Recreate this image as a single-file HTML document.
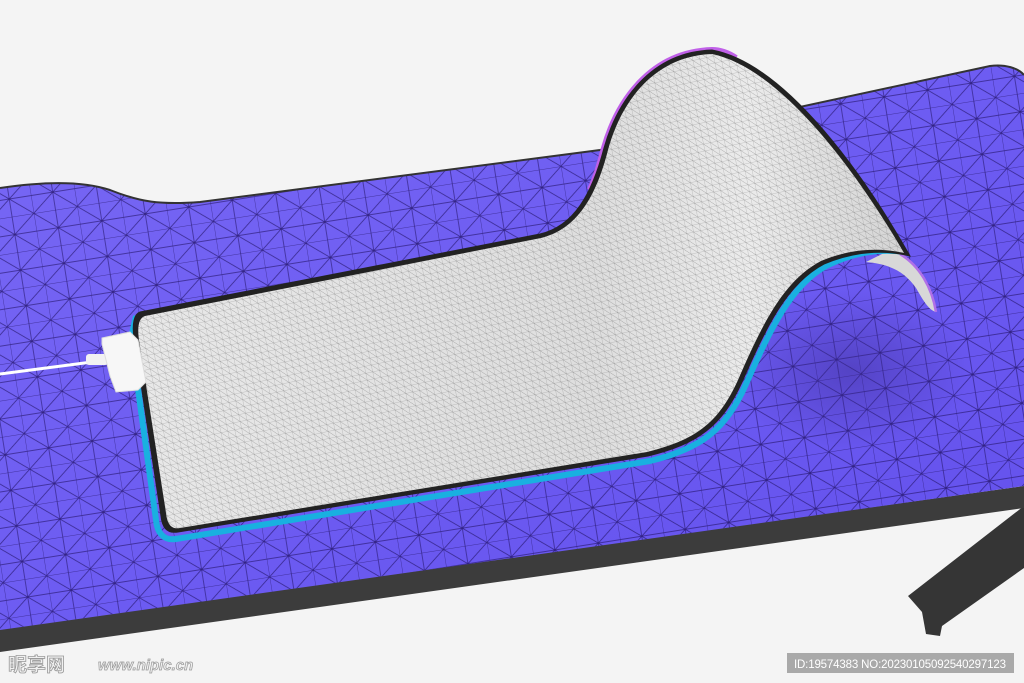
<!DOCTYPE html>
<html><head><meta charset="utf-8"><style>
html,body{margin:0;padding:0;width:1024px;height:683px;overflow:hidden;background:#f4f4f4}
svg{display:block}
</style></head><body>
<svg width="1024" height="683" viewBox="0 0 1024 683" xmlns="http://www.w3.org/2000/svg">
<defs>
<pattern id="tri" width="44" height="36" patternUnits="userSpaceOnUse" patternTransform="rotate(-9)">
<path d="M0 0H44M0 0V36M0 0L44 36M44 0L0 36M22 0V36M0 18H44" stroke="#1e1060" stroke-width="0.7" opacity="0.75" fill="none"/>
</pattern>
<pattern id="fine" width="7" height="7" patternUnits="userSpaceOnUse" patternTransform="rotate(-12)">
<path d="M0 0H7M0 0V7M0 0L7 7" stroke="#444" stroke-width="0.4" fill="none"/>
</pattern>
<linearGradient id="desk" x1="0" y1="0" x2="1" y2="1">
<stop offset="0" stop-color="#7868f4"/><stop offset="0.5" stop-color="#6d5cf2"/><stop offset="1" stop-color="#6350ec"/>
</linearGradient>
<linearGradient id="mat" x1="0" y1="0" x2="1" y2="0">
<stop offset="0" stop-color="#e8e8e8"/><stop offset="0.6" stop-color="#dedede"/><stop offset="0.8" stop-color="#ebebeb"/><stop offset="1" stop-color="#d4d4d4"/>
</linearGradient>
<radialGradient id="shadow" cx="0.5" cy="0.5" r="0.5"><stop offset="0" stop-color="#3a2a90" stop-opacity="0.45"/><stop offset="1" stop-color="#3a2a90" stop-opacity="0"/></radialGradient>
</defs>
<polygon points="908,596 1024,506 1024,568 942,626 940,636 926,634 922,612" fill="#353535"/>
<rect x="1014" y="380" width="10" height="30" rx="5" fill="#333"/>
<path d="M0 628 L1024 486 L1024 508 L0 652 Z" fill="#3c3c3c"/>
<path d="M0 188 C40 182 80 180 110 190 C140 202 160 205 200 202 L600 150 L990 66 C1005 64 1018 68 1024 75 L1024 486 L0 630 Z" fill="url(#desk)"/>
<path d="M0 188 C40 182 80 180 110 190 C140 202 160 205 200 202 L600 150 L990 66 C1005 64 1018 68 1024 75 L1024 486 L0 630 Z" fill="url(#tri)"/>
<path d="M0 188 C40 182 80 180 110 190 C140 202 160 205 200 202 L600 150 L990 66 C1005 64 1018 68 1024 75" stroke="#333" stroke-width="2" fill="none"/>
<ellipse cx="850" cy="370" rx="120" ry="80" fill="url(#shadow)"/>
<path d="M890 250 C915 258 932 282 936 312 C928 310 922 298 916 288 C905 272 890 264 866 262 Z" fill="#d8d8d8"/>
<path d="M900 254 C920 266 932 288 936 312" stroke="#b070e8" stroke-width="2.5" fill="none"/>
<path d="M136 316 L131 338 L156 520 C157 532 163 541 176 539 L650 461 C700 449 726 430 746 384 C770 330 790 286 826 266 C850 254 875 248 905 252" stroke="#19b0e0" stroke-width="6" fill="none" stroke-linejoin="round"/>
<path d="M590 190 C598 172 600 162 604 148 C617 102 650 52 712 50 C722 50 730 54 736 58" stroke="#c060e8" stroke-width="6" fill="none"/>
<path d="M140 312 L540 234 C574 226 592 194 604 148 C617 102 650 52 712 50 C788 64 868 182 910 256 C878 248 848 254 824 264 C786 284 766 328 742 382 C722 426 698 444 648 456 L178 532 C166 534 162 526 161 516 L134 338 C132 324 134 314 140 312 Z" fill="#222" stroke="#222" stroke-width="1"/>
<path d="M145 316 L541 238 C577 229 596 197 608 150 C620 105 652 56 712 54 C785 69 864 184 904 253 C873 246 845 251 821 261 C783 281 762 325 738 380 C718 424 695 440 647 452 L180 528 C170 530 167 522 166 513 L139 340 C137 326 139 318 145 316 Z" fill="url(#mat)"/>
<path d="M145 316 L541 238 C577 229 596 197 608 150 C620 105 652 56 712 54 C785 69 864 184 904 253 C873 246 845 251 821 261 C783 281 762 325 738 380 C718 424 695 440 647 452 L180 528 C170 530 167 522 166 513 L139 340 C137 326 139 318 145 316 Z" fill="url(#fine)" opacity="0.6"/>
<path d="M0 374 L92 362" stroke="#fff" stroke-width="3"/>
<rect x="86" y="354" width="22" height="11" rx="3" fill="#f2f2f2"/>
<path d="M102 338 L130 332 L138 340 L146 382 L138 390 L116 392 L110 376 L102 344 Z" fill="#f7f7f7" stroke="#ddd" stroke-width="1"/>
<text x="8" y="671" font-family="'Liberation Sans','Noto Sans CJK SC',sans-serif" font-size="19" font-weight="bold" fill="#f0f0f0" stroke="#999" stroke-width="0.8">昵享网</text>
<text x="98" y="670" font-family="'Liberation Sans',sans-serif" font-size="15" font-style="italic" font-weight="bold" fill="#f0f0f0" stroke="#999" stroke-width="0.7">www.nipic.cn</text>
<rect x="787" y="653" width="227" height="20" fill="#a9a9a9"/>
<text x="900" y="668" text-anchor="middle" font-family="'Liberation Sans',sans-serif" font-size="11.5" fill="#fff" textLength="212">ID:19574383 NO:20230105092540297123</text>
</svg>
</body></html>
